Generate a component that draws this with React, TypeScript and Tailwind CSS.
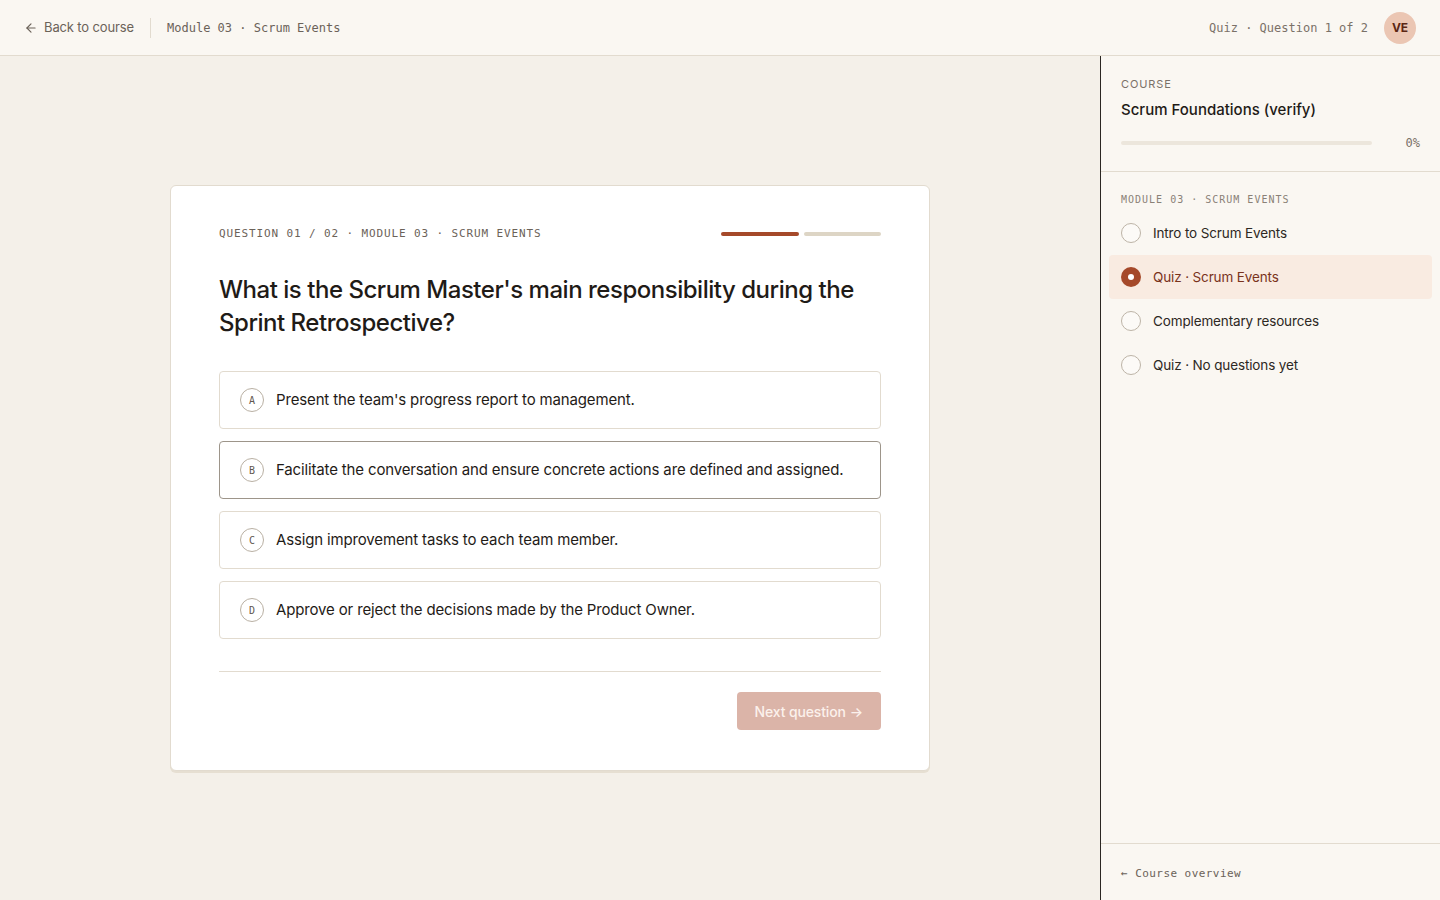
import { ArrowLeft } from "lucide-react";

const sans = "font-['Inter','Liberation_Sans',sans-serif]";
const mono = "font-['DejaVu_Sans_Mono','Liberation_Mono',monospace]";

const options = [
  { key: "A", text: "Present the team's progress report to management." },
  {
    key: "B",
    text: "Facilitate the conversation and ensure concrete actions are defined and assigned.",
    hover: true,
  },
  { key: "C", text: "Assign improvement tasks to each team member." },
  { key: "D", text: "Approve or reject the decisions made by the Product Owner." },
];

const lessons = [
  { title: "Intro to Scrum Events" },
  { title: "Quiz · Scrum Events", active: true },
  { title: "Complementary resources" },
  { title: "Quiz · No questions yet" },
];

const Header = () => (
  <header className="h-14 shrink-0 flex items-center justify-between px-6 bg-[#faf7f2] border-b border-[#e2dbcf]">
    <div className="flex items-center">
      <button className="flex items-center gap-1.5 text-[13px] tracking-[-0.01em] text-[#6b6259]">
        <ArrowLeft size={14} strokeWidth={2} />
        Back to course
      </button>
      <div className="w-px h-5 bg-[#e2dbcf] mx-4" />
      <span className={`${mono} text-[12px] text-[#6b6259]`}>Module 03 · Scrum Events</span>
    </div>
    <div className="flex items-center gap-4">
      <span className={`${mono} text-[12px] text-[#7a7168]`}>Quiz · Question 1 of 2</span>
      <div className="w-8 h-8 rounded-full bg-[#ebc6b3] flex items-center justify-center text-[12px] font-bold text-[#5b2614]">
        VE
      </div>
    </div>
  </header>
);

const QuizCard = () => (
  <div className="w-[760px] bg-white border border-[#e2dbcf] rounded-md shadow-[0_2px_0_#e6dfd2] px-12 pt-10 pb-10">
    <div className="flex items-center justify-between h-4">
      <span className={`${mono} text-[11px] tracking-[0.08em] text-[#6b6259]`}>
        QUESTION 01 / 02 · MODULE 03 · SCRUM EVENTS
      </span>
      <div className="flex gap-[5px]">
        <div className="w-[78px] h-1 rounded-full bg-[#a5492a]" />
        <div className="w-[77px] h-1 rounded-full bg-[#ddd5c5]" />
      </div>
    </div>
    <h1 className="mt-[31px] text-[24px] leading-[33px] font-medium text-[#1f1b17] tracking-[-0.02em]">
      What is the Scrum Master's main responsibility during the Sprint Retrospective?
    </h1>
    <div className="mt-8 flex flex-col gap-3">
      {options.map((o) => (
        <div
          key={o.key}
          className={`h-[58px] flex items-center gap-3 px-5 rounded-sm border ${
            o.hover ? "border-[#9d958a]" : "border-[#e2dbcf]"
          }`}
        >
          <span
            className={`${mono} w-6 h-6 rounded-full border border-[#b9b0a3] flex items-center justify-center text-[10px] text-[#5f5850]`}
          >
            {o.key}
          </span>
          <span className="text-[15px] tracking-[-0.01em] text-[#1f1b17]">{o.text}</span>
        </div>
      ))}
    </div>
    <div className="mt-8 pt-5 border-t border-[#e2dbcf] flex justify-end">
      <button className="h-[38px] px-[18px] rounded-sm bg-[#dbb4a8] text-[14px] tracking-[-0.01em] font-medium text-[#fbf1ec] flex items-center gap-1">
        Next question <span className="text-[14px]">→</span>
      </button>
    </div>
  </div>
);

const Sidebar = () => (
  <aside className="w-[340px] shrink-0 bg-[#faf7f2] border-l border-[#2b2622] flex flex-col">
    <div className="px-5 pt-5 pb-[19px] border-b border-[#e2dbcf]">
      <div className="text-[11px] tracking-[0.08em] text-[#7a7168]">COURSE</div>
      <div className="mt-[6px] text-[15px] font-medium text-[#1f1b17]">Scrum Foundations (verify)</div>
      <div className="mt-[13px] flex items-center justify-between">
        <div className="w-[251px] h-1 rounded-full bg-[#ece6dc]" />
        <span className={`${mono} text-[12px] text-[#7a7168]`}>0%</span>
      </div>
    </div>
    <div className="px-2 pt-5 flex-1">
      <div className={`${mono} px-3 text-[10px] tracking-[0.1em] text-[#8a8177]`}>
        MODULE 03 · SCRUM EVENTS
      </div>
      <div className="mt-[4px] flex flex-col">
        {lessons.map((l) => (
          <div
            key={l.title}
            className={`h-11 flex items-center gap-3 px-3 rounded ${l.active ? "bg-[#f9ebe1]" : ""}`}
          >
            {l.active ? (
              <span className="w-5 h-5 rounded-full bg-[#a5492a] flex items-center justify-center">
                <span className="w-[6px] h-[6px] rounded-full bg-white" />
              </span>
            ) : (
              <span className="w-5 h-5 rounded-full border border-[#bdb4a7] bg-white/40" />
            )}
            <span className={`text-[13.5px] tracking-[-0.01em] ${l.active ? "text-[#7a331c]" : "text-[#2d2823]"}`}>
              {l.title}
            </span>
          </div>
        ))}
      </div>
    </div>
    <div className={`${mono} h-[57px] shrink-0 border-t border-[#e2dbcf] px-5 pt-[4px] flex items-center text-[11px] tracking-[0.04em] text-[#6b6259]`}>
      ← Course overview
    </div>
  </aside>
);

export default function App() {
  return (
    <div className={`${sans} h-[900px] w-full flex flex-col bg-[#f4f0e9]`}>
      <Header />
      <div className="flex flex-1 min-h-0">
        <main className="flex-1 flex items-center justify-center">
          <QuizCard />
        </main>
        <Sidebar />
      </div>
    </div>
  );
}
